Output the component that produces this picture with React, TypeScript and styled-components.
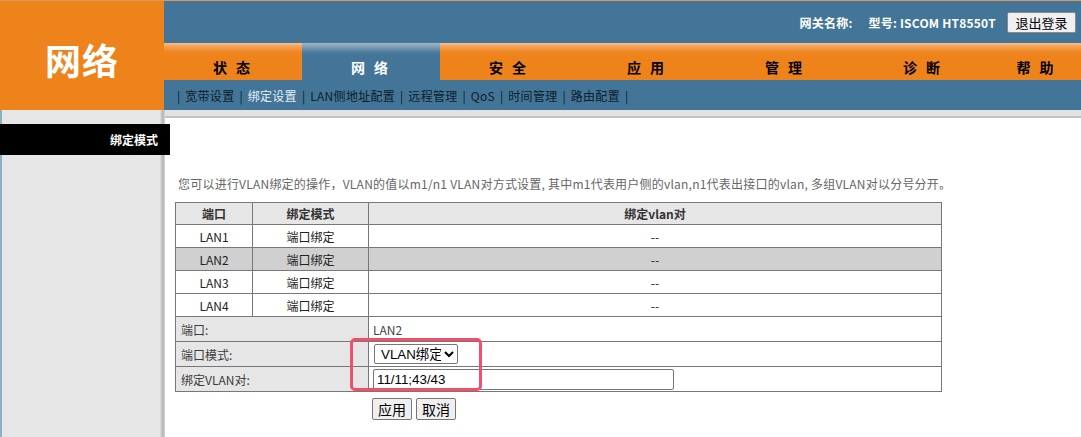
import React from 'react';
import styled, { createGlobalStyle } from 'styled-components';

const GlobalStyle = createGlobalStyle`
  html, body {
    margin: 0;
    padding: 0;
    background: #ffffff;
    overflow: hidden;
  }
  body {
    font-family: "Noto Sans CJK SC", "Liberation Sans", sans-serif;
  }
`;

const Page = styled.div`
  width: 1081px;
  height: 437px;
  display: flex;
  flex-direction: column;
  overflow: hidden;
`;

const Top = styled.div`
  display: grid;
  grid-template-columns: 164px 1fr;
  height: 110px;
`;

const Logo = styled.div`
  background: #ef831b;
  border-top: 1px solid #d99a5e;
  color: #ffffff;
  font-size: 36px;
  font-weight: bold;
  display: flex;
  align-items: center;
  justify-content: center;
  padding-top: 6px;
  letter-spacing: 1px;
`;

const HeadRight = styled.div`
  display: flex;
  flex-direction: column;
`;

const HeaderBar = styled.div`
  height: 42px;
  background: #427597;
  border-top: 1px solid #d99a5e;
  display: flex;
  align-items: center;
  justify-content: flex-end;
  padding-right: 5px;
  color: #ffffff;
  font-size: 12px;
  font-weight: bold;
`;

const InfoText = styled.span<{ $gap: number }>`
  margin-right: ${p => p.$gap}px;
  letter-spacing: 0.2px;
`;

const LogoutButton = styled.button`
  height: 21px;
  width: 69px;
  padding: 0;
  font-family: "Noto Sans CJK SC", sans-serif;
  font-size: 13px;
  color: #000;
  background: #f0f0f0;
  border: 1px solid #8a8a8a;
  border-radius: 2px;
  line-height: 19px;
`;

const Tabs = styled.div`
  height: 37px;
  display: flex;
`;

const Tab = styled.div<{ $active?: boolean; $last?: boolean }>`
  ${p => (p.$last ? 'flex: 1;' : 'width: 138px;')}
  background: ${p =>
    p.$active
      ? 'linear-gradient(to bottom, #a2b8c8 0px, #7d9cb4 4px, #4d7d9f 9px, #427597 12px)'
      : 'linear-gradient(to bottom, #f9c08e 0px, #f5a45c 3px, #ef8a28 8px, #ef831b 12px)'};
  color: ${p => (p.$active ? '#ffffff' : '#000000')};
  font-size: 14px;
  font-weight: bold;
  line-height: 22px;
  padding-top: 13px;
  text-align: center;
  box-sizing: border-box;
  letter-spacing: 3px;
  white-space: pre;
`;

const SubNav = styled.div`
  height: 30px;
  background: #427597;
  display: flex;
  align-items: center;
  padding-left: 8px;
  font-size: 12px;
  color: #0f1d2a;
  white-space: nowrap;
`;

const Sep = styled.span`
  margin: 0 5px;
  color: #0f1d2a;
`;

const SubLink = styled.span<{ $active?: boolean }>`
  color: ${p => (p.$active ? '#e3eef7' : '#0f1d2a')};
  letter-spacing: 0.3px;
`;

const Body = styled.div`
  flex: 1;
  display: flex;
`;

const Sidebar = styled.div`
  width: 165px;
  flex-shrink: 0;
  box-sizing: border-box;
  border-left: 2px solid #8db0c2;
  background: linear-gradient(
    to right,
    #e6e6e6 0,
    #e6e6e6 158px,
    #cdcdcd 159px,
    #b3b3b3 161px,
    #d9d9d9 163px
  );
  padding-top: 14px;
`;

const SideItem = styled.div`
  position: relative;
  margin-left: -2px;
  width: 170px;
  height: 31px;
  background: #000000;
  color: #ffffff;
  font-size: 12px;
  font-weight: bold;
  display: flex;
  align-items: center;
  justify-content: flex-end;
  padding-right: 12px;
  box-sizing: border-box;
  z-index: 1;
`;

const Main = styled.div`
  flex: 1;
  display: flex;
  flex-direction: column;
`;

const TopBand = styled.div`
  height: 6px;
  background: #e2e2e2;
  border-bottom: 2px solid #c2c2c2;
`;

const Content = styled.div`
  position: relative;
  flex: 1;
  background: #ffffff;
  padding: 58px 0 0 10px;
`;

const Note = styled.div`
  font-size: 12px;
  line-height: 16px;
  color: #666666;
  padding-left: 3px;
  margin-bottom: 10px;
  white-space: nowrap;
  letter-spacing: 0.22px;
`;

const Table = styled.table`
  width: 767px;
  border-collapse: collapse;
  font-size: 12px;
  color: #222222;
  table-layout: fixed;
`;

const Th = styled.th`
  height: 21px;
  padding: 0;
  background: #e6e6e6;
  border: 1px solid #777777;
  font-weight: bold;
  color: #333;
`;

const Row = styled.tr<{ $selected?: boolean }>`
  background: ${p => (p.$selected ? '#d0d0d0' : '#ffffff')};
`;

const Td = styled.td`
  height: 22px;
  padding: 0;
  border: 1px solid #777777;
  text-align: center;
`;

const LabelCell = styled.td`
  height: 24px;
  padding: 0 0 0 5px;
  border: 1px solid #777777;
  background: #e6e6e6;
  color: #3c3c3c;
  text-align: left;
`;

const ValueCell = styled.td`
  height: 24px;
  padding: 0 0 0 4px;
  border: 1px solid #777777;
  background: #ffffff;
  color: #444444;
  text-align: left;
`;

const Select = styled.select`
  width: 84px;
  height: 20px;
  font-family: "Liberation Sans", "Noto Sans CJK SC", sans-serif;
  font-size: 13.33px;
  color: #000;
  border: 1px solid #767676;
  border-radius: 2px;
  background: #fff;
  padding: 0 0 0 2px;
  margin: 0 0 0 1px;
`;

const TextInput = styled.input`
  width: 301px;
  height: 21px;
  box-sizing: border-box;
  font-family: "Liberation Sans", "Noto Sans CJK SC", sans-serif;
  font-size: 13.33px;
  color: #000;
  border: 1px solid #767676;
  border-radius: 2px;
  padding: 1px 3px;
  margin: 0;
`;

const ButtonRow = styled.div`
  display: flex;
  gap: 4px;
  padding-left: 197px;
  margin-top: 6px;
`;

const FormButton = styled.button`
  height: 22px;
  padding: 0 5px;
  font-family: "Noto Sans CJK SC", sans-serif;
  font-size: 14px;
  line-height: 20px;
  color: #000;
  background: #efefef;
  border: 1px solid #767676;
  border-radius: 2px;
`;

const Highlight = styled.div`
  position: absolute;
  left: 185px;
  top: 220px;
  width: 132px;
  height: 53px;
  box-sizing: border-box;
  border: 3px solid #f2506a;
  border-radius: 5px;
  pointer-events: none;
`;

const tabs = ['状 态', '网 络', '安 全', '应 用', '管 理', '诊 断', '帮 助'];
const subLinks = ['宽带设置', '绑定设置', 'LAN侧地址配置', '远程管理', 'QoS', '时间管理', '路由配置'];
const ports = ['LAN1', 'LAN2', 'LAN3', 'LAN4'];

const App: React.FC = () => {
  return (
    <Page>
      <GlobalStyle />
      <Top>
        <Logo>网络</Logo>
        <HeadRight>
          <HeaderBar>
            <InfoText $gap={16}>网关名称:</InfoText>
            <InfoText $gap={11}>型号: ISCOM HT8550T</InfoText>
            <LogoutButton>退出登录</LogoutButton>
          </HeaderBar>
          <Tabs>
            {tabs.map((t, i) => (
              <Tab key={t} $active={i === 1} $last={i === tabs.length - 1}>
                {t}
              </Tab>
            ))}
          </Tabs>
          <SubNav>
            <Sep>|</Sep>
            {subLinks.map(s => (
              <React.Fragment key={s}>
                <SubLink $active={s === '绑定设置'}>{s}</SubLink>
                <Sep>|</Sep>
              </React.Fragment>
            ))}
          </SubNav>
        </HeadRight>
      </Top>
      <Body>
        <Sidebar>
          <SideItem>绑定模式</SideItem>
        </Sidebar>
        <Main>
          <TopBand />
          <Content>
            <Note>
              您可以进行VLAN绑定的操作，VLAN的值以m1/n1 VLAN对方式设置, 其中m1代表用户侧的vlan,n1代表出接口的vlan, 多组VLAN对以分号分开。
            </Note>
            <Table>
              <colgroup>
                <col style={{ width: 77 }} />
                <col style={{ width: 116 }} />
                <col />
              </colgroup>
              <tbody>
                <tr>
                  <Th>端口</Th>
                  <Th>绑定模式</Th>
                  <Th>绑定vlan对</Th>
                </tr>
                {ports.map(p => (
                  <Row key={p} $selected={p === 'LAN2'}>
                    <Td>{p}</Td>
                    <Td>端口绑定</Td>
                    <Td>--</Td>
                  </Row>
                ))}
                <tr>
                  <LabelCell colSpan={2}>端口:</LabelCell>
                  <ValueCell>LAN2</ValueCell>
                </tr>
                <tr>
                  <LabelCell colSpan={2}>端口模式:</LabelCell>
                  <ValueCell>
                    <Select defaultValue="vlan">
                      <option value="port">端口绑定</option>
                      <option value="vlan">VLAN绑定</option>
                    </Select>
                  </ValueCell>
                </tr>
                <tr>
                  <LabelCell colSpan={2}>绑定VLAN对:</LabelCell>
                  <ValueCell>
                    <TextInput defaultValue="11/11;43/43" />
                  </ValueCell>
                </tr>
              </tbody>
            </Table>
            <ButtonRow>
              <FormButton>应用</FormButton>
              <FormButton>取消</FormButton>
            </ButtonRow>
            <Highlight />
          </Content>
        </Main>
      </Body>
    </Page>
  );
};

export default App;
